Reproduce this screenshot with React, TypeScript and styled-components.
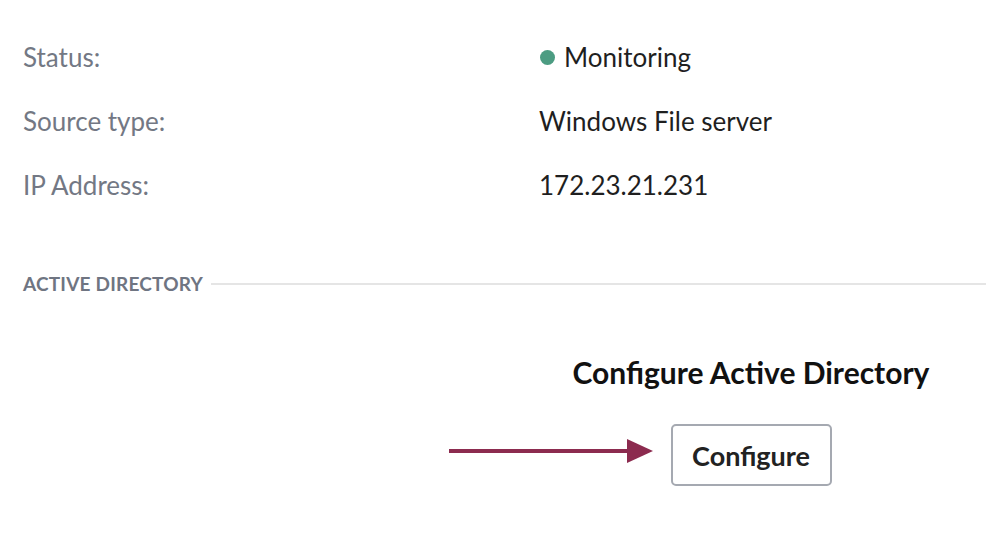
import styled, { createGlobalStyle } from "styled-components";

const GlobalStyle = createGlobalStyle`
    html, body {
        margin: 0;
        padding: 0;
        background: #ffffff;
    }
    body {
        font-family: Lato, "Open Sans", "Liberation Sans", sans-serif;
        color: #1f1f1f;
    }
`;

const details = [
    { label: "Status:", value: "Monitoring", dot: true },
    { label: "Source type:", value: "Windows File server" },
    { label: "IP Address:", value: "172.23.21.231" },
];

const App = () => {
    return (
        <Page>
            <GlobalStyle />
            <DetailList>
                {details.map((row) => (
                    <DetailRow key={row.label}>
                        <Label>{row.label}</Label>
                        <Value>
                            {row.dot && <StatusDot />}
                            {row.value}
                        </Value>
                    </DetailRow>
                ))}
            </DetailList>
            <SectionHeader>
                <SectionTitle>Active Directory</SectionTitle>
                <SectionRule />
            </SectionHeader>
            <ConfigureBlock>
                <ConfigureTitle>Configure Active Directory</ConfigureTitle>
                <ButtonWrap>
                    <Arrow width="204" height="26" viewBox="0 0 204 26">
                        <line x1="0" y1="13" x2="184" y2="13" stroke="#8c2b4f" strokeWidth="4" />
                        <polygon points="178,1 204,13 178,25" fill="#8c2b4f" />
                    </Arrow>
                    <ConfigureButton>Configure</ConfigureButton>
                </ButtonWrap>
            </ConfigureBlock>
        </Page>
    );
};

export default App;

// styled-component

const Page = styled.div`
    padding: 25px 0 0 23px;
    width: 986px;
    box-sizing: border-box;
`;

const DetailList = styled.div`
    display: flex;
    flex-direction: column;
`;

const DetailRow = styled.div`
    display: grid;
    grid-template-columns: 516px 1fr;
    height: 64px;
    align-items: center;
    font-size: 26px;
`;

const Label = styled.span`
    color: #737884;
`;

const Value = styled.span`
    display: flex;
    align-items: center;
    color: #1f1f1f;
`;

const StatusDot = styled.span`
    width: 15px;
    height: 15px;
    border-radius: 50%;
    background: #4c9c82;
    margin: 0 9px 0 1px;
`;

const SectionHeader = styled.div`
    display: flex;
    align-items: center;
    gap: 8px;
    margin-top: 55px;
`;

const SectionTitle = styled.span`
    font-size: 19px;
    font-weight: 700;
    text-transform: uppercase;
    color: #6f7582;
    letter-spacing: 0.2px;
`;

const SectionRule = styled.span`
    flex: 1;
    height: 2px;
    background: #e5e5e5;
`;

const ConfigureBlock = styled.div`
    display: flex;
    flex-direction: column;
    align-items: center;
    width: 470px;
    margin-left: 493px;
    margin-top: 59px;
`;

const ConfigureTitle = styled.h2`
    margin: 0;
    font-size: 30px;
    font-weight: 700;
    color: #111111;
`;

const ButtonWrap = styled.div`
    position: relative;
    margin-top: 34px;
`;

const Arrow = styled.svg`
    position: absolute;
    right: calc(100% + 18px);
    top: 50%;
    transform: translateY(calc(-50% - 4px));
`;

const ConfigureButton = styled.button`
    width: 161px;
    height: 62px;
    border: 2px solid #a5a9b1;
    border-radius: 5px;
    background: #ffffff;
    font-family: inherit;
    font-size: 27px;
    font-weight: 700;
    color: #222222;
`;
